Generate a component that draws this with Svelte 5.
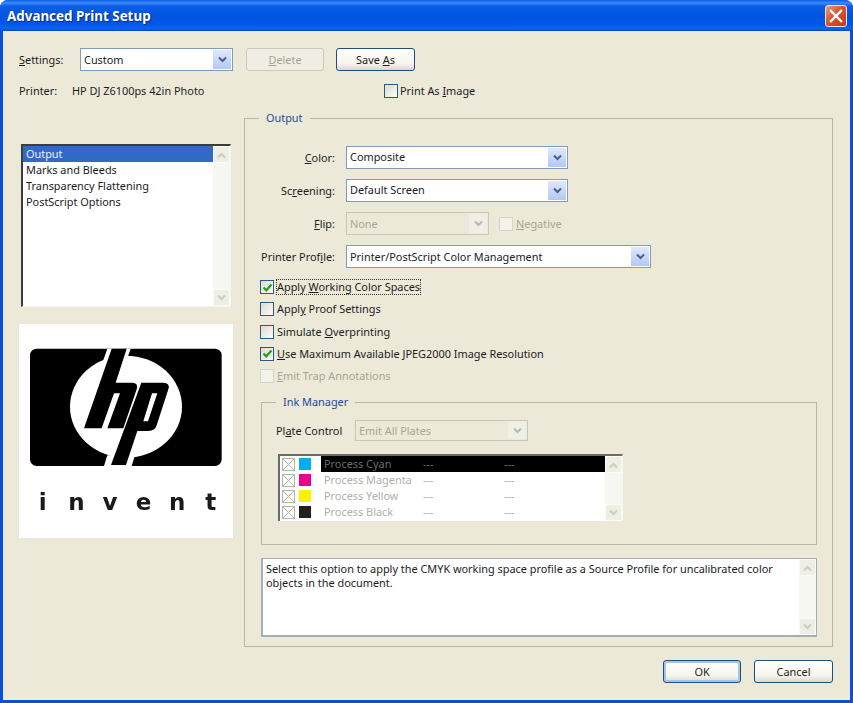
<script>
  const listItems = ['Marks and Bleeds', 'Transparency Flattening', 'PostScript Options'];
  const inks = [
    { name: 'Process Cyan', color: '#00aeef', active: true },
    { name: 'Process Magenta', color: '#ec008c' },
    { name: 'Process Yellow', color: '#fff200' },
    { name: 'Process Black', color: '#231f20' }
  ];
</script>

{#snippet chevron(cls)}
  <svg class={cls} width="11" height="8" viewBox="0 0 11 8"><path d="M2 1.5 L5.5 5 L9 1.5" fill="none" stroke="currentColor" stroke-width="2"/></svg>
{/snippet}

{#snippet select(text, cls)}
  <div class="select {cls}">
    <span class="sel-text">{text}</span>
    <span class="sel-btn">{@render chevron('')}</span>
  </div>
{/snippet}

{#snippet scrollbar()}
  <div class="sb">
    <span class="sb-btn">{@render chevron('up')}</span>
    <span class="sb-btn">{@render chevron('')}</span>
  </div>
{/snippet}

{#snippet tick()}
  <svg width="11" height="11" viewBox="0 0 11 11"><path d="M1.5 5.5 L4.3 8.3 L9.5 2.5" fill="none" stroke="#21a121" stroke-width="2.2"/></svg>
{/snippet}

<div class="window">
  <header class="titlebar">
    <span class="title">Advanced Print Setup</span>
    <span class="close">
      <svg width="14" height="14" viewBox="0 0 14 14"><path d="M2 2 L12 12 M12 2 L2 12" stroke="#fff" stroke-width="2.4" stroke-linecap="square"/></svg>
    </span>
  </header>

  <div class="client">
    <div class="row-settings">
      <span class="lbl-settings"><u>S</u>ettings:</span>
      {@render select('Custom', 'sel-settings')}
      <button class="btn disabled"><u>D</u>elete</button>
      <button class="btn saveas">Save <u>A</u>s</button>
    </div>

    <div class="row-printer">
      <span class="lbl-printer">Printer:</span>
      <span class="printer-name">HP DJ Z6100ps 42in Photo</span>
      <span class="box"></span>
      <span class="print-image">Print As <u>I</u>mage</span>
    </div>

    <div class="main">
      <aside class="left">
        <div class="list">
          <div class="list-items">
            <div class="li selected">Output</div>
            {#each listItems as item}
              <div class="li">{item}</div>
            {/each}
          </div>
          {@render scrollbar()}
        </div>
        <div class="logo">
          <svg class="hp" width="214" height="160" viewBox="57 14 642 480">
            <rect x="90" y="88" width="575" height="352" rx="20" fill="#000"/>
            <ellipse cx="378" cy="262" rx="168" ry="153" fill="#fff"/>
            <path d="M322 88 H392 L380 122 H310 Z M322 408 H405 L395 440 H312 Z" fill="#fff"/>
            <path d="M335 88 H380 L347 190 H397 Q416 190 410 210 L370 327 H322 L360 222 H342 L305 327 H252 Z" fill="#000"/>
            <path fill-rule="evenodd" d="M424 190 H490 Q511 190 505 210 L470 318 Q465 335 445 335 H412 L378 437 H333 Z M456 222 L430 306 H444 L472 222 Z" fill="#000"/>
          </svg>
          <div class="invent">
            <span>i</span><span>n</span><span>v</span><span>e</span><span>n</span><span>t</span>
          </div>
        </div>
      </aside>

      <section class="group output">
        <span class="legend">Output</span>

        <div class="frow">
          <span class="flabel"><u>C</u>olor:</span>
          {@render select('Composite', 'sel-md first')}
        </div>
        <div class="frow">
          <span class="flabel">Sc<u>r</u>eening:</span>
          {@render select('Default Screen', 'sel-md first')}
        </div>
        <div class="frow">
          <span class="flabel"><u>F</u>lip:</span>
          {@render select('None', 'sel-flip off')}
          <span class="box off neg-box"></span>
          <span class="dim"><u>N</u>egative</span>
        </div>
        <div class="frow last">
          <span class="flabel">Printer Prof<u>i</u>le:</span>
          {@render select('Printer/PostScript Color Management', 'sel-lg')}
        </div>

        <div class="checks">
          <div class="check"><span class="box">{@render tick()}</span><span class="focus">Apply <u>W</u>orking Color Spaces</span></div>
          <div class="check"><span class="box"></span><span>Appl<u>y</u> Proof Settings</span></div>
          <div class="check"><span class="box"></span><span>Simulate <u>O</u>verprinting</span></div>
          <div class="check"><span class="box">{@render tick()}</span><span><u>U</u>se Maximum Available JPEG2000 Image Resolution</span></div>
          <div class="check"><span class="box off"></span><span class="dim"><u>E</u>mit Trap Annotations</span></div>
        </div>

        <section class="group ink">
          <span class="legend">Ink Manager</span>
          <div class="plate">
            <span class="plate-label">Pl<u>a</u>te Control</span>
            {@render select('Emit All Plates', 'sel-plate off')}
          </div>
          <div class="ink-table">
            <div class="ink-rows">
              {#each inks as ink}
                <div class="ink-row">
                  <svg class="xbox" width="13" height="13" viewBox="0 0 13 13"><path d="M.5 .5 H12.5 V12.5 H.5 Z M.5 .5 L12.5 12.5 M12.5 .5 L.5 12.5" fill="none" stroke="#b4b4ac"/></svg>
                  <span class="swatch" style="background:{ink.color}"></span>
                  <div class="ink-cells" class:active={ink.active}>
                    <span class="c-name">{ink.name}</span>
                    <span class="c-dash">---</span>
                    <span>---</span>
                  </div>
                </div>
              {/each}
            </div>
            {@render scrollbar()}
          </div>
        </section>

        <div class="desc">
          <p>Select this option to apply the CMYK working space profile as a Source Profile for uncalibrated color objects in the document.</p>
          {@render scrollbar()}
        </div>
      </section>
    </div>

    <footer class="footer">
      <button class="btn default">OK</button>
      <button class="btn">Cancel</button>
    </footer>
  </div>
</div>

<style>
  :global(body) { margin: 0; background: #fff; }
  * { box-sizing: border-box; }
  .window {
    width: 853px; height: 703px; display: flex; flex-direction: column;
    background: #0a4fd6; border-radius: 8px 8px 0 0; overflow: hidden;
    font: 10.9px/14px "Noto Sans", sans-serif; color: #1c1c1c;
  }
  .titlebar {
    height: 31px; flex: none; display: flex; align-items: center; justify-content: space-between;
    padding: 0 6px 0 7px;
    background: linear-gradient(#0a5be6 0, #3c8df5 3px, #0a5ee8 6px, #0054e0 50%, #0058e8 80%, #0a66f0 92%, #0046c8 100%);
  }
  .title { font: bold 13.4px "Noto Sans", sans-serif; color: #fff; text-shadow: 1px 1px 1px #0a2a80; }
  .close {
    width: 22px; height: 22px; display: flex; align-items: center; justify-content: center;
    border: 1px solid #f2e4de; border-radius: 3px; background: linear-gradient(135deg, #e8a08a, #d8552f 45%, #c23a14);
  }
  .client {
    flex: 1; margin: 0 3px 3px; background: #ece9d8; padding: 17px 17px 0 16px;
    display: flex; flex-direction: column;
  }
  .row-settings { display: flex; align-items: center; height: 23px; }
  .lbl-settings { width: 61px; }
  .sel-settings { width: 153px; margin-right: 13px; }
  .btn {
    width: 79px; height: 23px; padding: 1px 0 0; font: inherit; color: #1c1c1c;
    border: 1px solid #1f4f78; border-radius: 3px;
    background: linear-gradient(#fff, #f6f5ee 70%, #dcd8c8);
  }
  .btn.disabled { border-color: #ccc9ba; color: #a5a394; background: #f0eee2; width: 78px; margin-right: 12px; }
  .btn.default { width: 78px; border-color: #1f4f78; box-shadow: inset 0 0 0 2px #a8c4ea; }

  .row-printer { display: flex; align-items: center; height: 14px; margin-top: 13px; }
  .lbl-printer { width: 53px; }
  .printer-name { width: 312px; }
  .print-image { margin-left: 2px; }

  .box {
    width: 14px; height: 14px; flex: none; display: flex; align-items: center; justify-content: center;
    border: 1px solid #2a5a84; background: linear-gradient(135deg, #dedcd0, #fbfbf8);
  }
  .box.off { border-color: #d6d4c6; background: #f4f2e8; }

  .main { display: flex; margin-top: 20px; }
  .left { width: 225px; flex: none; padding-top: 26px; }
  .list {
    width: 210px; height: 163px; margin-left: 2px; display: flex; background: #fff;
    border: solid #f6f5ee; border-width: 0 1px 1px 0; border-top: 2px solid #3c3c38; border-left: 2px solid #3c3c38;
  }
  .list-items { flex: 1; }
  .li { height: 16px; line-height: 16px; padding-left: 3px; }
  .li.selected { background: #316ac5; color: #e8effa; }

  .sb { width: 17px; flex: none; display: flex; flex-direction: column; justify-content: space-between; background: #f7f7f1; }
  .sb-btn {
    height: 17px; display: flex; align-items: center; justify-content: center;
    background: #eeeee4; border: 1px solid #fafaf6; color: #ccccc2;
  }
  .up { transform: rotate(180deg); }

  .logo { width: 214px; height: 214px; margin-top: 17px; background: #fff; }
  .hp { display: block; filter: blur(.5px); }
  .invent {
    display: grid; grid-template-columns: repeat(6, 33.6px); padding: 0 0 0 7px; margin-top: 4px;
    justify-items: center;
    font: bold 23px/28px "DejaVu Sans", sans-serif; color: #1a1a1a; filter: blur(.6px);
  }

  .group { position: relative; border: 1px solid #b8b6a6; }
  .legend {
    position: absolute; top: -8px; background: #ece9d8; padding: 0 7px; color: #1d4c9e;
  }
  .output { width: 589px; height: 529px; padding: 27px 0 0 16px; }
  .output > .legend { left: 14px; }
  .frow { display: flex; align-items: center; height: 23px; margin-bottom: 10px; }
  .frow.last { margin-bottom: 0; }
  .flabel { width: 74px; margin-right: 11px; text-align: right; white-space: nowrap; display: flex; justify-content: flex-end; }

  .select {
    height: 23px; display: flex; align-items: stretch; background: #fff;
    border: 1px solid #7f9db9;
  }
  .sel-text { flex: 1; padding: 4px 0 0 3px; }
  .sel-btn {
    width: 18px; margin: 1px; display: flex; align-items: center; justify-content: center;
    background: linear-gradient(#dfe8fb, #b2c9f4); color: #4a5f8c;
  }
  .select.off { background: #ece9d8; border-color: #c9c7b8; color: #a8a696; }
  .select.off .sel-btn { background: #efefe6; color: #b8b8ac; }
  .sel-md { width: 222px; }
  .first .sel-text { padding-top: 3px; }
  .sel-flip { width: 143px; margin-right: 10px; }
  .sel-lg { width: 305px; }
  .sel-plate { width: 173px; height: 21px; }
  .sel-plate .sel-text { padding-top: 3px; }
  .neg-box { margin-right: 3px; }
  .dim { color: #a8a696; }

  .checks { margin-top: 8px; margin-bottom: 15px; }
  .check { height: 22.25px; display: flex; align-items: center; gap: 3px; margin-left: -1px; }
  .focus { outline: 1px dotted #333; outline-offset: 0; }

  .ink { width: 556px; height: 143px; padding: 17px 0 0 14px; }
  .ink > .legend { left: 14px; }
  .plate { display: flex; align-items: center; height: 21px; }
  .plate-label { width: 79px; white-space: nowrap; }
  .ink-table {
    width: 345px; height: 67px; margin: 13px 0 0 2px; display: flex; background: #fff;
    border-top: 2px solid #6c6c64; border-left: 2px solid #6c6c64; border-right: 1px solid #f6f5ee;
  }
  .ink-rows { flex: 1; }
  .ink-row { height: 16px; display: flex; align-items: center; color: #b0b0a8; }
  .xbox { margin-left: 2px; flex: none; }
  .swatch { width: 12px; height: 12px; margin-left: 4px; margin-right: 10px; flex: none; }
  .ink-cells { flex: 1; height: 16px; display: flex; align-items: center; padding-left: 3px; }
  .ink-cells.active { background: #000; color: #6c6c66; }
  .c-name { width: 99px; }
  .c-dash { width: 81px; }

  .desc {
    width: 556px; height: 79px; margin-top: 13px; display: flex; background: #fff;
    border: 1px solid #a4aeb6; border-left-width: 2px; border-bottom-width: 2px;
  }
  .desc p { flex: 1; margin: 0; padding: 3px 18px 0 3px; line-height: 14px; }

  .footer { display: flex; justify-content: flex-end; gap: 13px; margin-top: 13px; }
</style>
